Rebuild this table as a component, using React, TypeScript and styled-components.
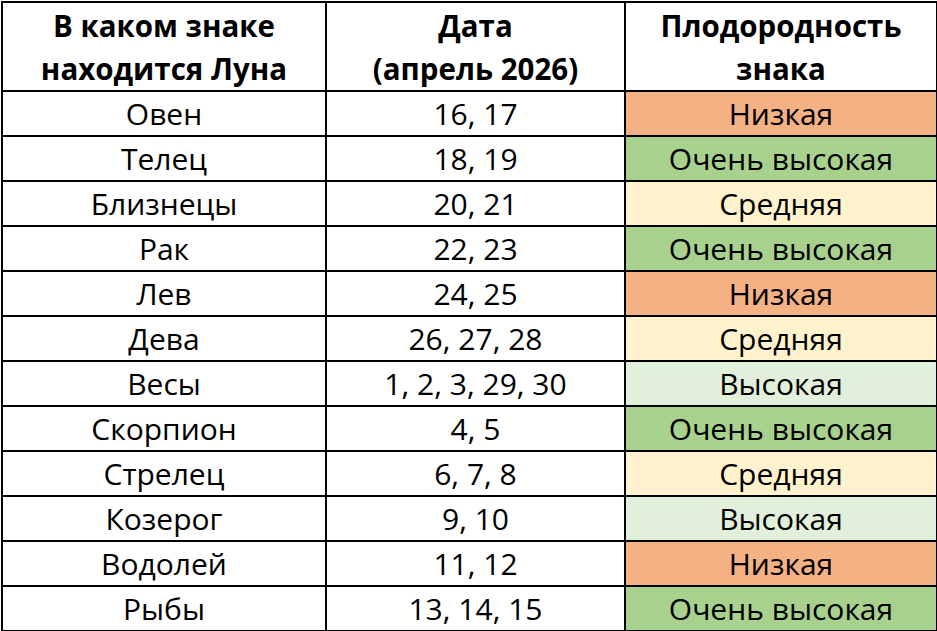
import React from 'react';
import styled, { createGlobalStyle } from 'styled-components';

const GlobalStyle = createGlobalStyle`
  html, body {
    margin: 0;
    padding: 0;
    background: #ffffff;
  }
  body {
    font-family: "Open Sans", Lato, sans-serif;
    color: #000;
  }
`;

type Level = 'low' | 'mid' | 'high' | 'top';

const levelColors: Record<Level, string> = {
  low: '#f4b183',
  mid: '#fff2cc',
  high: '#e2efda',
  top: '#a9d18e',
};

const levelText: Record<Level, string> = {
  low: 'Низкая',
  mid: 'Средняя',
  high: 'Высокая',
  top: 'Очень высокая',
};

const rows: { sign: string; dates: string; level: Level }[] = [
  { sign: 'Овен', dates: '16, 17', level: 'low' },
  { sign: 'Телец', dates: '18, 19', level: 'top' },
  { sign: 'Близнецы', dates: '20, 21', level: 'mid' },
  { sign: 'Рак', dates: '22, 23', level: 'top' },
  { sign: 'Лев', dates: '24, 25', level: 'low' },
  { sign: 'Дева', dates: '26, 27, 28', level: 'mid' },
  { sign: 'Весы', dates: '1, 2, 3, 29, 30', level: 'high' },
  { sign: 'Скорпион', dates: '4, 5', level: 'top' },
  { sign: 'Стрелец', dates: '6, 7, 8', level: 'mid' },
  { sign: 'Козерог', dates: '9, 10', level: 'high' },
  { sign: 'Водолей', dates: '11, 12', level: 'low' },
  { sign: 'Рыбы', dates: '13, 14, 15', level: 'top' },
];

const Wrap = styled.div`
  padding: 1px 0 0 1px;
`;

const Table = styled.table`
  border-collapse: collapse;
  table-layout: fixed;
  width: 935px;
`;

const Head = styled.th`
  border: 2px solid #000;
  height: 87px;
  padding: 0;
  font-weight: 700;
  font-size: 29.5px;
  line-height: 43px;
  text-align: center;
  vertical-align: middle;
  white-space: nowrap;
`;

const Cell = styled.td<{ $bg?: string }>`
  border: 2px solid #000;
  height: 43px;
  padding: 0;
  font-size: 30px;
  line-height: 43px;
  text-align: center;
  vertical-align: middle;
  background: ${({ $bg }) => $bg || 'transparent'};
  white-space: nowrap;
`;

const App: React.FC = () => {
  return (
    <Wrap>
      <GlobalStyle />
      <Table>
        <colgroup>
          <col style={{ width: 324 }} />
          <col style={{ width: 299 }} />
          <col style={{ width: 312 }} />
        </colgroup>
        <thead>
          <tr>
            <Head>
              В каком знаке
              <br />
              находится Луна
            </Head>
            <Head>
              Дата
              <br />
              (апрель 2026)
            </Head>
            <Head>
              Плодородность
              <br />
              знака
            </Head>
          </tr>
        </thead>
        <tbody>
          {rows.map((r) => (
            <tr key={r.sign}>
              <Cell>{r.sign}</Cell>
              <Cell>{r.dates}</Cell>
              <Cell $bg={levelColors[r.level]}>{levelText[r.level]}</Cell>
            </tr>
          ))}
        </tbody>
      </Table>
    </Wrap>
  );
};

export default App;
